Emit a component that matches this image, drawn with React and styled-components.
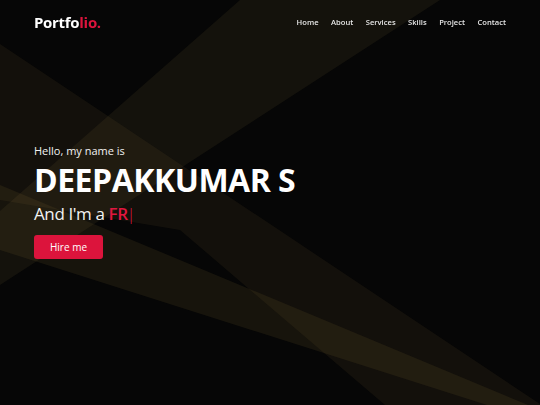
import React from "react";
import styled, { createGlobalStyle } from "styled-components";

const GlobalStyle = createGlobalStyle`
  * {
    margin: 0;
    padding: 0;
    box-sizing: border-box;
  }
  body {
    background: #060606;
    font-family: "Open Sans", "Noto Sans", sans-serif;
    color: #fff;
    overflow: hidden;
  }
`;

const Page = styled.div`
  position: relative;
  width: 100%;
  height: 100vh;
  background: #060606;
  overflow: hidden;
`;

const Beams = styled.svg`
  position: absolute;
  top: 0;
  left: 0;
  width: 100%;
  height: 100%;
  z-index: 0;
`;

const Navbar = styled.nav`
  position: fixed;
  top: 0;
  left: 0;
  right: 0;
  z-index: 2;
  height: 44px;
  padding: 0 34px;
  display: flex;
  align-items: center;
  justify-content: space-between;
`;

const Logo = styled.a`
  font-size: 15px;
  line-height: 21px;
  font-weight: 700;
  color: #fff;
  text-decoration: none;
  letter-spacing: -0.3px;

  span {
    color: #dc143c;
  }
`;

const Menu = styled.ul`
  list-style: none;
  display: flex;
  align-items: center;
  gap: 12.5px;
`;

const MenuItem = styled.li`
  display: flex;
`;

const MenuLink = styled.a`
  font-size: 7.6px;
  line-height: 11px;
  font-weight: 600;
  color: #e6e6e6;
  text-decoration: none;
`;

const Hero = styled.section`
  position: relative;
  z-index: 1;
  height: 100%;
  padding: 0 34px 3px;
  display: flex;
  flex-direction: column;
  justify-content: center;
  align-items: flex-start;
`;

const Greeting = styled.p`
  font-size: 11px;
  color: #f2f2f2;
  line-height: 15px;
`;

const Name = styled.h1`
  font-size: 32px;
  font-weight: 700;
  line-height: 44px;
  letter-spacing: -0.5px;
`;

const Role = styled.h3`
  font-size: 17px;
  font-weight: 400;
  line-height: 23px;
  letter-spacing: -0.4px;
  color: #f2f2f2;

  span {
    color: #e0173f;
    font-weight: 600;
  }
`;

const Cursor = styled.i`
  font-style: normal;
  color: #dc143c;
  font-weight: 300;
  margin-left: -1px;
`;

const HireButton = styled.a`
  margin-top: 10px;
  width: 69px;
  height: 24px;
  border-radius: 3px;
  background: #dc143c;
  color: #fff;
  font-size: 10px;
  display: flex;
  align-items: center;
  justify-content: center;
  text-decoration: none;
`;

const links = ["Home", "About", "Services", "Skills", "Project", "Contact"];

const App = () => (
  <>
    <GlobalStyle />
    <Page>
      <Beams viewBox="0 0 540 405" preserveAspectRatio="none">
        <polygon points="240,0 440,0 0,285 0,211" fill="rgba(150,125,70,0.1)" />
        <polygon
          points="0,44 540,404 540,405 385,405 180,230 0,200"
          fill="rgba(150,125,70,0.09)"
        />
        <polygon points="0,185 540,410 487,405 0,250" fill="rgba(150,120,60,0.12)" />
      </Beams>
      <Navbar>
        <Logo href="#">
          Portfo<span>lio.</span>
        </Logo>
        <Menu>
          {links.map((l) => (
            <MenuItem key={l}>
              <MenuLink href="#">{l}</MenuLink>
            </MenuItem>
          ))}
        </Menu>
      </Navbar>
      <Hero>
        <Greeting>Hello, my name is</Greeting>
        <Name>DEEPAKKUMAR S</Name>
        <Role>
          And I'm a <span>FR</span>
          <Cursor>|</Cursor>
        </Role>
        <HireButton href="#">Hire me</HireButton>
      </Hero>
    </Page>
  </>
);

export default App;
